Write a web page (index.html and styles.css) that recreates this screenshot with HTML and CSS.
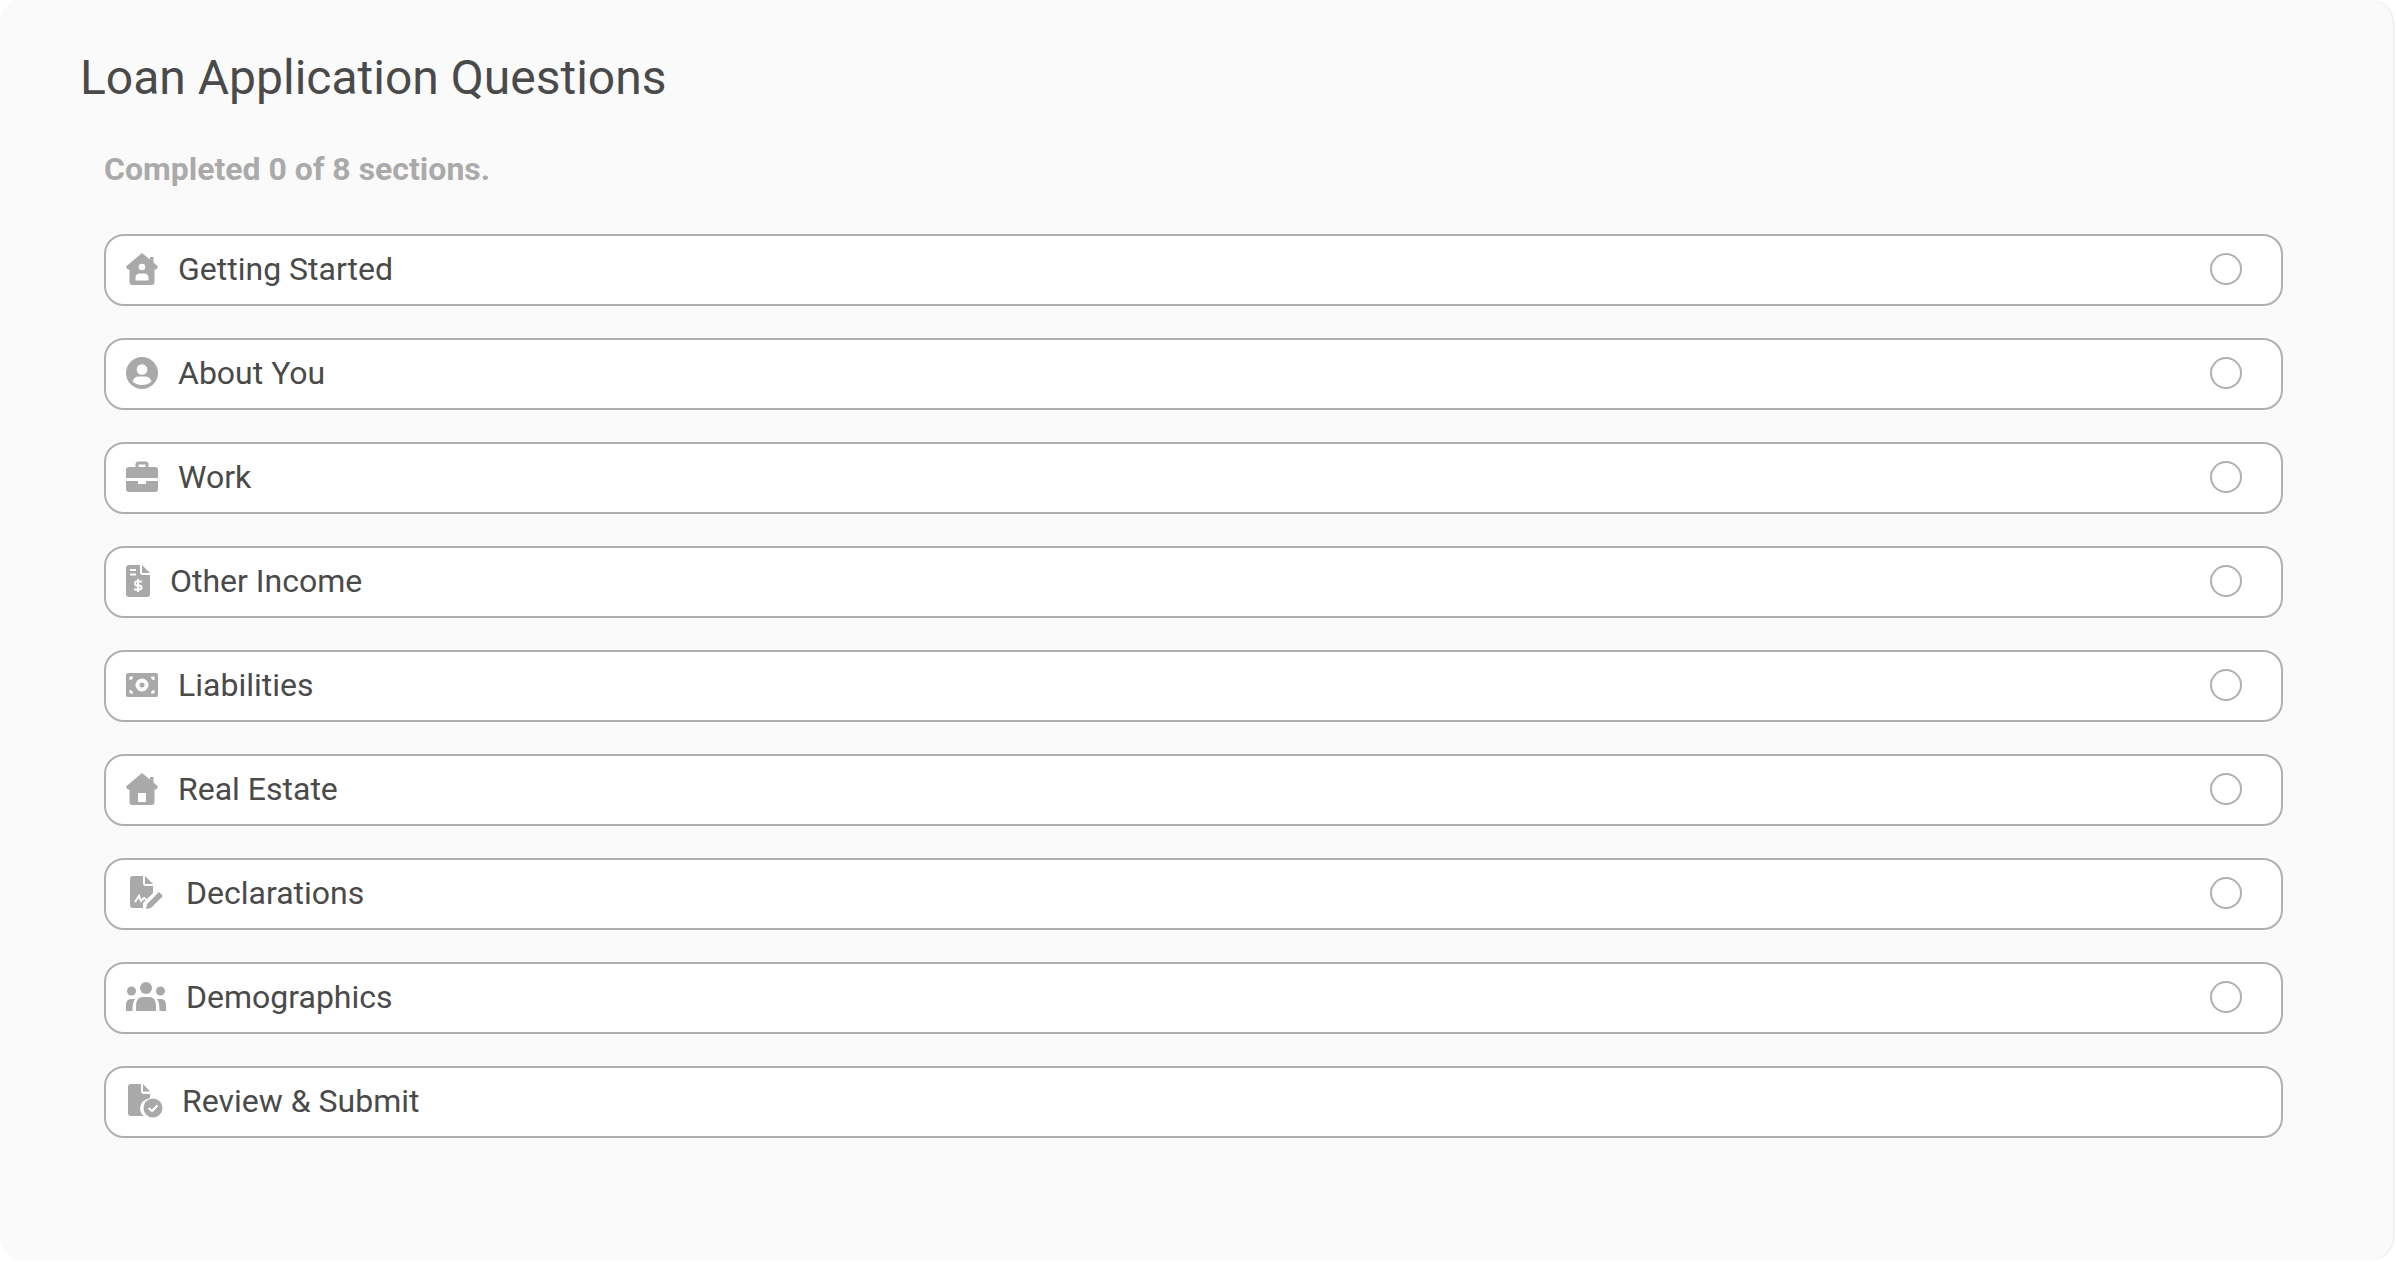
FILE: index.html
```html
<!DOCTYPE html>
<html>

<head>
    <meta charset="UTF-8">
    <meta name="viewport" content="width=device-width, initial-scale=1.0">
    <title>Loan Application Questions</title>
    <link rel="stylesheet" href="styles.css">
</head>

<body>

    <div class="card">
        <h1>Loan Application Questions</h1>

        <div class="content">
            <p class="progress">Completed 0 of 8 sections.</p>

            <ul class="sections">
                <li class="section">
                    <svg class="icon" width="32" height="32" viewBox="0 0 32 32">
                        <path fill="#a9a9a9" d="M16 0 L24 6.500 V4 H27.500 V9.500 L32 13.500 L30.500 16.500 H28.500 V29 Q28.500 32 25.500 32 H6.500 Q3.500 32 3.500 29 V16.500 H1.500 L0 13.500 Z" />
                        <circle fill="#fff" cx="16" cy="14" r="3.300" />
                        <path fill="#fff" d="M9.500 27.500 V25 Q9.500 20.500 14 20.500 H18 Q22.500 20.500 22.500 25 V27.500 Z" />
                    </svg>
                    <span class="name">Getting Started</span>
                    <span class="status"></span>
                </li>
                <li class="section">
                    <svg class="icon" width="32" height="32" viewBox="0 0 32 32">
                        <circle fill="#a9a9a9" cx="16" cy="16" r="16" />
                        <circle fill="#fff" cx="16" cy="12.500" r="5.300" />
                        <path fill="#fff" d="M6.500 24.500 Q8.500 19.500 12.500 19.500 H19.500 Q23.500 19.500 25.500 24.500 Q21.500 28 16 28 Q10.500 28 6.500 24.500 Z" />
                    </svg>
                    <span class="name">About You</span>
                    <span class="status"></span>
                </li>
                <li class="section">
                    <svg class="icon" width="32" height="32" viewBox="0 0 32 32">
                        <path fill="#a9a9a9" fill-rule="evenodd" d="M3 6 H9.500 V3.500 Q9.500 0.500 12.500 0.500 H19.500 Q22.500 0.500 22.500 3.500 V6 H29 Q32 6 32 9 V17 H0 V9 Q0 6 3 6 Z M12.500 6 H19.500 V3.500 H12.500 Z" />
                        <path fill="#a9a9a9" d="M0 20 H12 V23 H20 V20 H32 V28 Q32 31 29 31 H3 Q0 31 0 28 Z" />
                    </svg>
                    <span class="name">Work</span>
                    <span class="status"></span>
                </li>
                <li class="section">
                    <svg class="icon" width="24" height="32" viewBox="0 0 24 32">
                        <path fill="#a9a9a9" d="M3 0 H14 V7 Q14 10 17 10 H24 V29 Q24 32 21 32 H3 Q0 32 0 29 V3 Q0 0 3 0 Z M16 0 L24 8 H16 Z" />
                        <path fill="#fff" d="M4 4 H10 V6 H4 Z M4 8.500 H10 V10.500 H4 Z" />
                        <path fill="none" stroke="#fff" stroke-width="2" d="M16 16.500 H10.500 Q9 16.500 9 18.500 Q9 20.500 11 20.500 H13.500 Q15.500 20.500 15.500 22.500 Q15.500 24.500 13.500 24.500 H8 M12 14 V27" />
                    </svg>
                    <span class="name">Other Income</span>
                    <span class="status"></span>
                </li>
                <li class="section">
                    <svg class="icon" width="32" height="32" viewBox="0 0 32 32">
                        <path fill="#a9a9a9" d="M2 4 H30 Q32 4 32 6 V26 Q32 28 30 28 H2 Q0 28 0 26 V6 Q0 4 2 4 Z" />
                        <circle fill="#fff" cx="16" cy="16" r="6.500" />
                        <circle fill="#a9a9a9" cx="16" cy="16" r="2.500" />
                        <path fill="#fff" d="M3.500 7.500 H7 A3.500 3.500 0 0 1 3.500 11 Z M28.500 7.500 H25 A3.500 3.500 0 0 0 28.500 11 Z M3.500 24.500 H7 A3.500 3.500 0 0 0 3.500 21 Z M28.500 24.500 H25 A3.500 3.500 0 0 1 28.500 21 Z" />
                    </svg>
                    <span class="name">Liabilities</span>
                    <span class="status"></span>
                </li>
                <li class="section">
                    <svg class="icon" width="32" height="32" viewBox="0 0 32 32">
                        <path fill="#a9a9a9" d="M16 0 L24 6.500 V4 H27.500 V9.500 L32 13.500 L30.500 16.500 H28.500 V29 Q28.500 32 25.500 32 H6.500 Q3.500 32 3.500 29 V16.500 H1.500 L0 13.500 Z" />
                        <rect fill="#fff" x="12" y="20" width="8" height="9" />
                    </svg>
                    <span class="name">Real Estate</span>
                    <span class="status"></span>
                </li>
                <li class="section">
                    <svg class="icon icon-sign" width="34" height="34" viewBox="0 0 34 34">
                        <path fill="#a9a9a9" d="M3 0 H13 V7 Q13 10 16 10 H23 V17 L13 27 V32 H3 Q0 32 0 29 V3 Q0 0 3 0 Z M15 0 L23 8 H15 Z" />
                        <path fill="none" stroke="#fff" stroke-width="2" d="M5 26 L9 20 L11 25 L14 22 L17 24" />
                        <path fill="#a9a9a9" d="M17 28 L29 16 L33 20 L21 32 L16 33 Z" />
                    </svg>
                    <span class="name">Declarations</span>
                    <span class="status"></span>
                </li>
                <li class="section">
                    <svg class="icon" width="40" height="30" viewBox="0 0 40 30">
                        <circle fill="#a9a9a9" cx="20" cy="6" r="6" />
                        <circle fill="#a9a9a9" cx="5.500" cy="9" r="4.500" />
                        <circle fill="#a9a9a9" cx="34.500" cy="9" r="4.500" />
                        <path fill="#a9a9a9" d="M10 29 V24 Q10 15 17 15 H23 Q30 15 30 24 V29 Z" />
                        <path fill="#a9a9a9" d="M0 29 V23 Q0 17 5 17 H9 Q6.500 20 6.500 29 Z M40 29 V23 Q40 17 35 17 H31 Q33.500 20 33.500 29 Z" />
                    </svg>
                    <span class="name">Demographics</span>
                    <span class="status"></span>
                </li>
                <li class="section">
                    <svg class="icon icon-review" width="36" height="34" viewBox="0 0 36 34">
                        <path fill="#a9a9a9" d="M3 0 H13 V7 Q13 10 16 10 H22 V14 Q13 16 12 24 Q12 29 16 32 H3 Q0 32 0 29 V3 Q0 0 3 0 Z M15 0 L22 7.500 H15 Z" />
                        <circle fill="#a9a9a9" cx="25" cy="24" r="9.500" />
                        <path fill="none" stroke="#fff" stroke-width="2.200" d="M20.500 24 L24 27 L29.500 21.500" />
                    </svg>
                    <span class="name">Review &amp; Submit</span>
                </li>
            </ul>
        </div>
    </div>

</body>

</html>
```

FILE: styles.css
```css
body {
    margin: 0;
    background-color: #fff;
    font-family: Roboto, sans-serif;
}

.card {
    box-sizing: border-box;
    width: 2393px;
    height: 1260px;
    padding: 50px 80px 0;
    background-color: #fafafa;
    border-radius: 24px;
    box-shadow: 1px 0 2px rgba(0, 0, 0, 0.1);
}

h1 {
    margin: 0;
    color: #4a4a4a;
    font-size: 48px;
    font-weight: 400;
    line-height: 56px;
}

.content {
    padding: 0 24px;
    width: 2179px;
}

.progress {
    margin: 44px 0 46px;
    color: #aaa;
    font-size: 32px;
    font-weight: 700;
    line-height: 38px;
}

.sections {
    display: flex;
    flex-direction: column;
    gap: 32px;
    margin: 0;
    padding: 0;
    list-style: none;
}

.section {
    display: flex;
    align-items: center;
    box-sizing: border-box;
    height: 72px;
    padding: 0 24px 2px 20px;
    background-color: #fff;
    border: 2px solid #b0b0b0;
    border-radius: 20px;
    color: #4a4a4a;
    font-size: 32px;
}

.icon {
    flex-shrink: 0;
    margin-right: 20px;
}

.icon-sign {
    margin-left: 4px;
    margin-right: 22px;
}

.icon-review {
    margin-left: 2px;
    margin-right: 18px;
}

.name {
    flex: 1;
}

.status {
    box-sizing: border-box;
    width: 32px;
    height: 32px;
    margin-right: 15px;
    border: 2px solid #b0b0b0;
    border-radius: 50%;
}
```
